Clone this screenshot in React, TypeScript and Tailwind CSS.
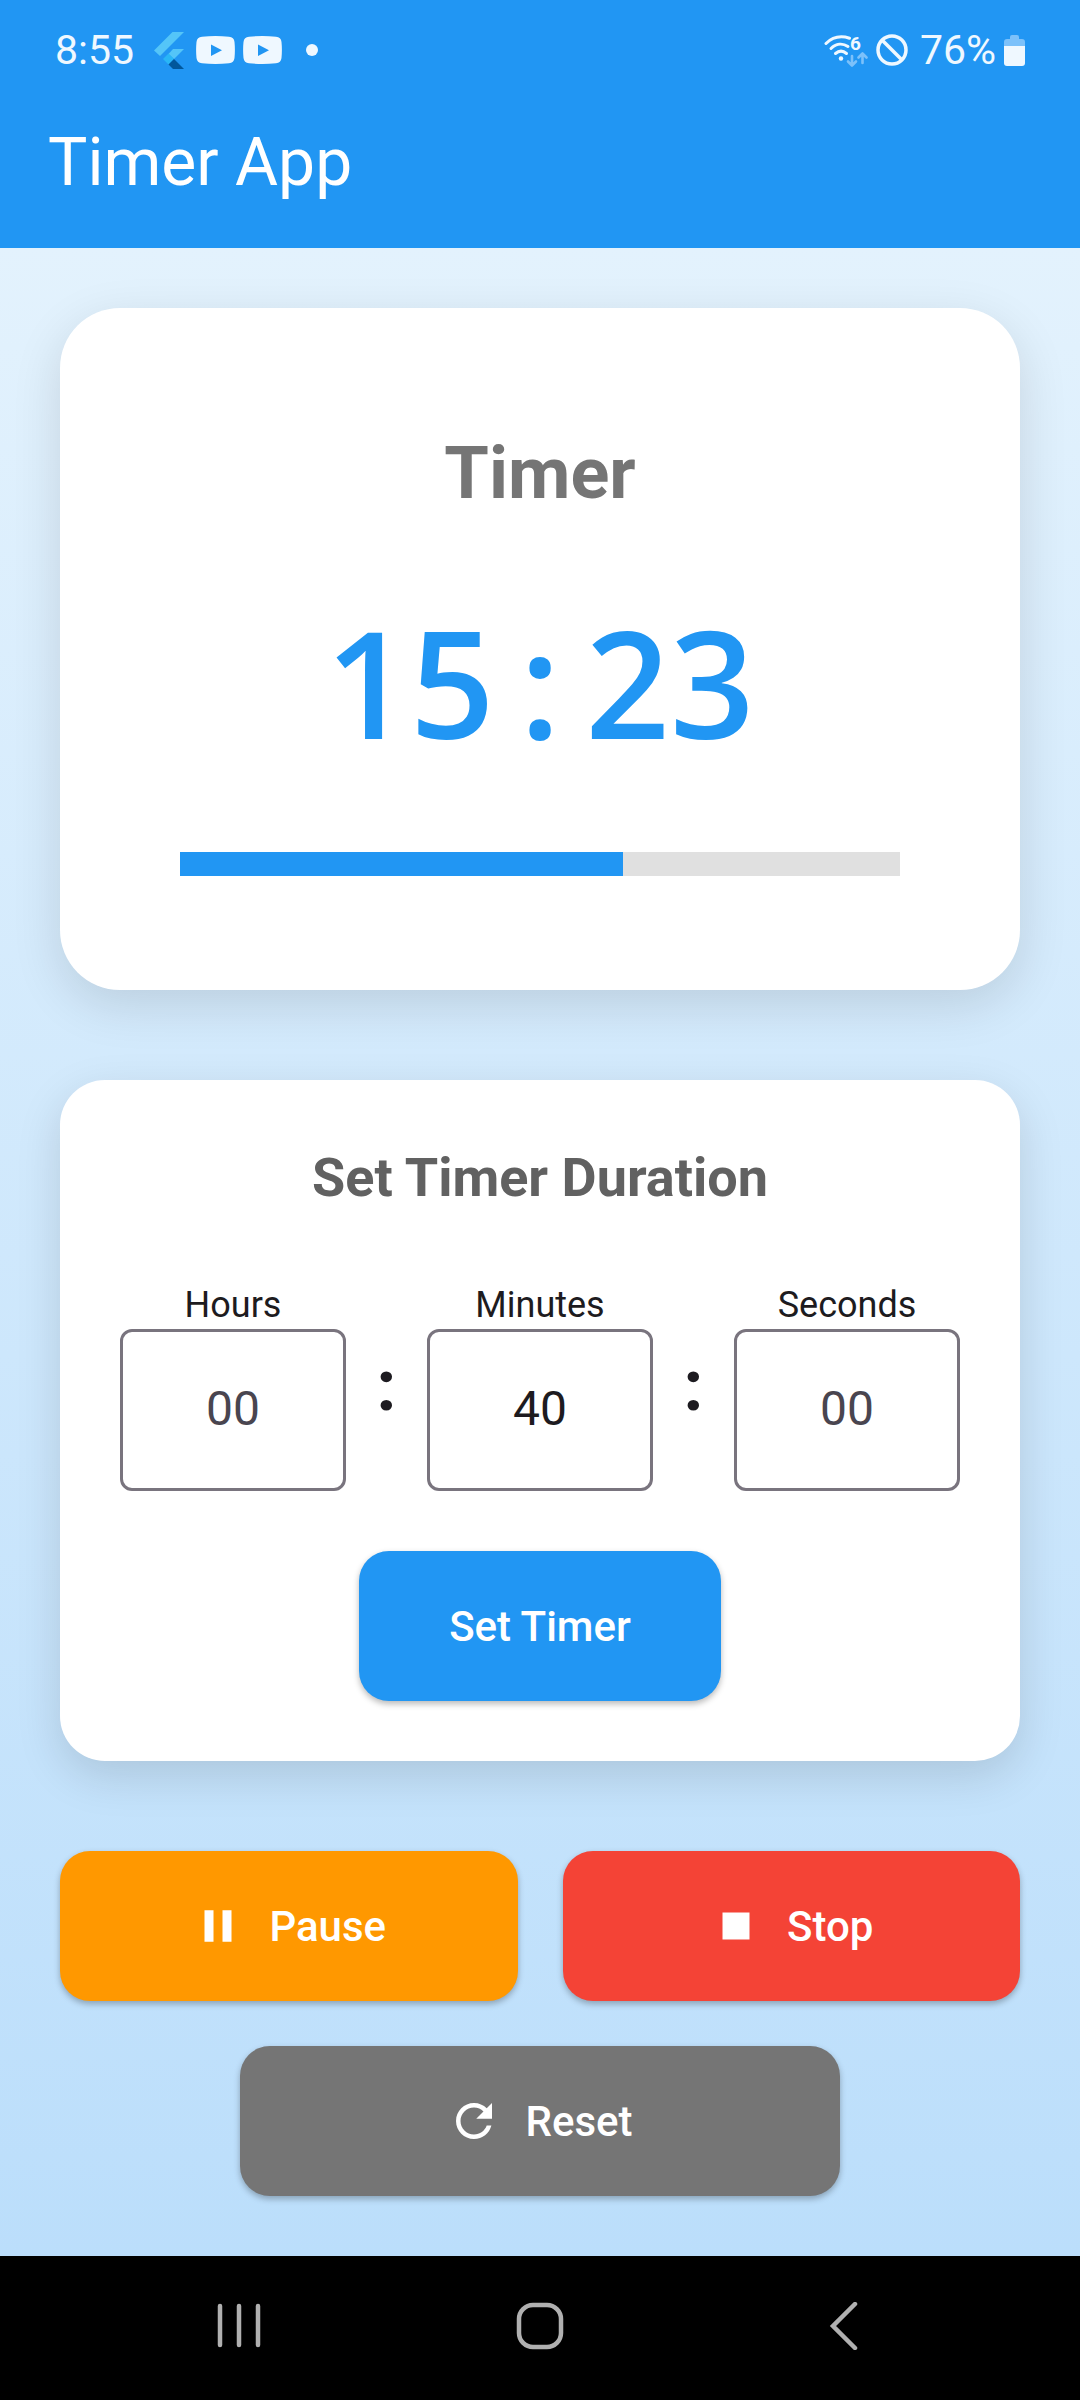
import { Fragment, useState } from "react";

function FlutterIcon() {
  return (
    <svg width="30" height="37" viewBox="0 0 30 37" aria-hidden="true">
      <path d="M18.500 0H30L6 24L0 18.500Z" fill="#54c5f8" />
      <path d="M19 17H30L20 27L14.500 22Z" fill="#54c5f8" />
      <path d="M14.500 21.500L20 27L14.500 32.500L9 27Z" fill="#29b6f6" />
      <path d="M20 27L30 37H19L14.500 32.500Z" fill="#01579b" />
    </svg>
  );
}

function VideoIcon() {
  return (
    <svg width="39" height="28" viewBox="0 0 39 28" aria-hidden="true">
      <path
        fillRule="evenodd"
        fill="#eff8ff"
        d="M6 .8Q19.500-.8 33 .8Q38 1.200 38.500 6Q39.300 14 38.500 22Q38 26.800 33 27.200Q19.500 28.800 6 27.200Q1 26.800 .5 22Q-.3 14 .5 6Q1 1.200 6 .8ZM15 8.500V20L26 14.200Z"
      />
    </svg>
  );
}

function WifiIcon() {
  return (
    <svg width="44" height="38" viewBox="0 0 44 38" fill="none" aria-hidden="true">
      <g stroke="#eff8ff" strokeWidth="3" strokeLinecap="round">
        <path d="M2 12.500C9 5.500 17 4.500 25.500 7.200" />
        <path d="M7 17.500C12 12.500 18.500 11.800 24 15.500" />
        <path d="M11.500 22.500C15 19.500 19 19.500 22.500 22.500" />
      </g>
      <circle cx="17" cy="27.500" r="2.200" fill="#eff8ff" />
      <text x="26" y="18.500" fontSize="19" fontWeight="700" fill="#eff8ff" fontFamily="Roboto, sans-serif">
        6
      </text>
      <g stroke="#7cc1fa" strokeWidth="2.600" strokeLinecap="round" strokeLinejoin="round">
        <path d="M28 25V34M24 30.500L28 34.500L32 30.500" />
        <path d="M38.500 32V22.500M34.500 26.500L38.500 22.500L42.500 26.500" />
      </g>
    </svg>
  );
}

function BlockedIcon() {
  return (
    <svg width="32" height="32" viewBox="0 0 32 32" fill="none" stroke="#eff8ff" strokeWidth="3.500" aria-hidden="true">
      <circle cx="16" cy="16" r="14" />
      <path d="M6 6L26 26" />
    </svg>
  );
}

function BatteryIcon() {
  return (
    <svg width="21" height="31" viewBox="0 0 21 31" aria-hidden="true">
      <path d="M6 2Q6 0 8 0H13Q15 0 15 2V4H18Q21 4 21 7V11H0V7Q0 4 3 4H6Z" fill="#7cc1fa" />
      <path d="M0 11H21V28Q21 31 18 31H3Q0 31 0 28Z" fill="#eff8ff" />
    </svg>
  );
}

function StatusBar() {
  return (
    <div className="flex h-[100px] items-center justify-between px-[55px] text-[41px] leading-none text-[#eff8ff]">
      <div className="flex items-center">
        <span>8:55</span>
        <span className="ml-5 flex items-center gap-2">
          <FlutterIcon />
          <span className="ml-1 flex gap-2">
            <VideoIcon />
            <VideoIcon />
          </span>
          <span className="ml-4 size-3 rounded-full bg-[#eff8ff]" />
        </span>
      </div>
      <div className="flex items-center">
        <span className="flex items-center gap-2">
          <WifiIcon />
          <BlockedIcon />
        </span>
        <span className="ml-3">76%</span>
        <span className="ml-2">
          <BatteryIcon />
        </span>
      </div>
    </div>
  );
}

const actionClass =
  "flex h-[150px] cursor-pointer items-center justify-center gap-6 rounded-[30px] text-[42px] font-medium text-white shadow-[0_3px_6px_rgba(0,0,0,0.28)]";

const iconPaths = {
  pause: "M6 19h4V5H6v14zm8-14v14h4V5h-4z",
  stop: "M6 6h12v12H6z",
  reset:
    "M17.650 6.350C16.200 4.900 14.210 4 12 4c-4.420 0-7.990 3.580-7.990 8s3.570 8 7.990 8c3.730 0 6.840-2.550 7.730-6h-2.080c-.82 2.330-3.040 4-5.650 4-3.310 0-6-2.690-6-6s2.690-6 6-6c1.660 0 3.140.69 4.220 1.780L13 11h7V4l-2.350 2.350z",
};

function ActionIcon({ name }: { name: keyof typeof iconPaths }) {
  return (
    <svg width="54" height="54" viewBox="0 0 24 24" fill="currentColor" aria-hidden="true">
      <path d={iconPaths[name]} />
    </svg>
  );
}

function TimerCard({ progress }: { progress: number }) {
  return (
    <section className="rounded-[60px] bg-white px-[120px] pt-[120px] pb-[114px] text-center shadow-[0_15px_50px_rgba(0,0,0,0.12)]">
      <h2 className="text-[72px] leading-[92px] font-bold text-[#757575]">Timer</h2>
      <div className="mt-[72px] font-['Open_Sans',sans-serif] text-[148px] leading-[180px] font-semibold text-[#2196f3]">
        <span>15</span>
        <span className="px-[25px]">:</span>
        <span>23</span>
      </div>
      <div
        role="progressbar"
        aria-label="Time remaining"
        aria-valuenow={progress}
        className="mt-20 h-6 bg-[#e0e0e0]"
      >
        <div className="h-full bg-[#2196f3]" style={{ width: `${progress}%` }} />
      </div>
    </section>
  );
}

function DurationCard() {
  const [values, setValues] = useState<Record<string, string>>({ Hours: "", Minutes: "40", Seconds: "" });
  return (
    <section className="mt-[90px] rounded-[45px] bg-white p-[60px] shadow-[0_15px_45px_rgba(0,0,0,0.13)]">
      <h2 className="text-center text-[54px] leading-[76px] font-bold text-[#616161]">Set Timer Duration</h2>
      <div className="mt-[65px] flex items-center">
        {["Hours", "Minutes", "Seconds"].map((unit, i) => (
          <Fragment key={unit}>
            {i > 0 && (
              <span className="w-[81px] text-center text-[72px] leading-none font-bold text-[#1d1b20]">:</span>
            )}
            <label className="flex min-w-0 flex-1 flex-col text-center text-[36px] leading-[48px] text-[#1d1b20]">
              {unit}
              <input
                inputMode="numeric"
                placeholder="00"
                value={values[unit]}
                onChange={(e) => setValues({ ...values, [unit]: e.target.value })}
                className="h-[162px] w-full rounded-xl border-[3px] border-[#79747e] bg-white pb-1 text-center text-[48px] text-[#1d1b20] placeholder:text-[#49454f]"
              />
            </label>
          </Fragment>
        ))}
      </div>
      <button
        type="button"
        className="mx-auto mt-[60px] flex h-[150px] cursor-pointer items-center rounded-[30px] bg-[#2196f3] px-[90px] text-[42px] font-medium text-white shadow-[0_3px_6px_rgba(0,0,0,0.28)]"
      >
        Set Timer
      </button>
    </section>
  );
}

function NavigationBar() {
  return (
    <nav className="flex h-36 items-center justify-between bg-black px-[215px] pb-1">
      <button type="button" aria-label="Recent apps">
        <svg width="48" height="48" viewBox="0 0 48 48" stroke="#b0b0b0" strokeWidth="4.500" strokeLinecap="round">
          <path d="M5 4V43M24 4V43M43 4V43" />
        </svg>
      </button>
      <button type="button" aria-label="Home">
        <svg width="48" height="48" viewBox="0 0 48 48" fill="none" stroke="#b0b0b0" strokeWidth="4.500">
          <rect x="3" y="3" width="42" height="42" rx="14" />
        </svg>
      </button>
      <button type="button" aria-label="Back">
        <svg
          width="48"
          height="48"
          viewBox="0 0 48 48"
          fill="none"
          stroke="#b0b0b0"
          strokeWidth="4.500"
          strokeLinecap="round"
        >
          <path d="M38 2L16 24L38 46" />
        </svg>
      </button>
    </nav>
  );
}

export default function App() {
  return (
    <div className="flex min-h-screen flex-col font-[Roboto,sans-serif]">
      <header className="bg-[#2196f3] pb-[22px]">
        <StatusBar />
        <h1 className="px-12 text-[66px] leading-[126px] text-white">Timer App</h1>
      </header>
      <main className="flex-1 bg-linear-to-b from-[#e3f2fd] to-[#bbdefb] p-[60px]">
        <TimerCard progress={61.5} />
        <DurationCard />
        <div className="mt-[90px] grid grid-cols-2 gap-[45px]">
          <button type="button" className={`${actionClass} bg-[#ff9800]`}>
            <ActionIcon name="pause" />
            Pause
          </button>
          <button type="button" className={`${actionClass} bg-[#f44336]`}>
            <ActionIcon name="stop" />
            Stop
          </button>
        </div>
        <button type="button" className={`${actionClass} mx-auto mt-[45px] w-[600px] bg-[#757575]`}>
          <ActionIcon name="reset" />
          Reset
        </button>
      </main>
      <NavigationBar />
    </div>
  );
}
